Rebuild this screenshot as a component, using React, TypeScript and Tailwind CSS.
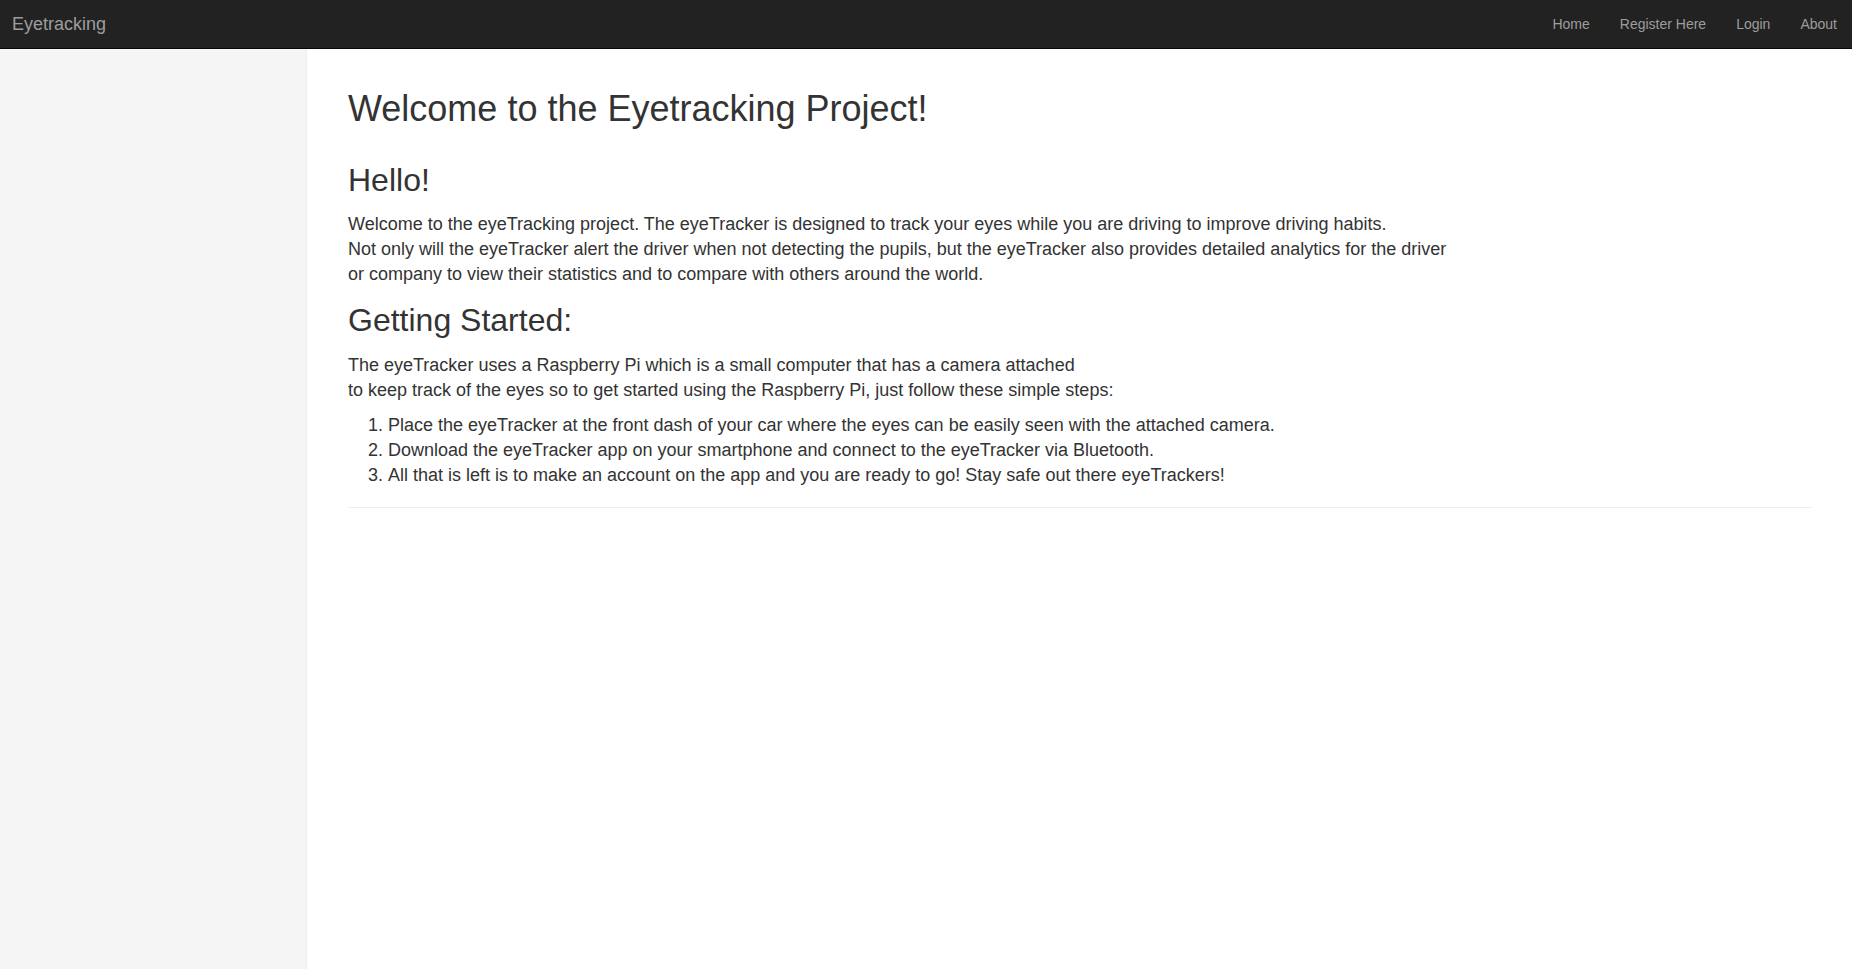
const navLinks = ['Home', 'Register Here', 'Login', 'About']

const steps = [
  'Place the eyeTracker at the front dash of your car where the eyes can be easily seen with the attached camera.',
  'Download the eyeTracker app on your smartphone and connect to the eyeTracker via Bluetooth.',
  'All that is left is to make an account on the app and you are ready to go! Stay safe out there eyeTrackers!',
]

export default function App() {
  return (
    <div className="min-h-screen flex flex-col bg-white text-[#333] font-['Liberation_Sans',Arial,sans-serif]">
      {/* Top navbar */}
      <nav className="h-[49px] bg-[#222] border-b border-[#080808] flex items-start justify-between">
        <a className="block pl-[12px] pr-[15px] pt-[14px] text-[18px] leading-[20px] text-[#9d9d9d]">Eyetracking</a>
        <ul className="flex">
          {navLinks.map((l) => (
            <li key={l}>
              <a className="block px-[15px] pt-[14px] text-[14px] leading-[20px] text-[#9d9d9d]">{l}</a>
            </li>
          ))}
        </ul>
      </nav>

      <div className="flex-1 flex">
        {/* Sidebar */}
        <aside className="w-[307px] shrink-0 bg-[#f5f5f5] border-r border-[#eee]" />

        {/* Main */}
        <main className="flex-1 pl-[41px] pr-10 pt-10">
          <h1 className="text-[36px] leading-[40px] font-normal">Welcome to the Eyetracking Project!</h1>

          <h2 className="mt-[34px] text-[32px] leading-[35px] font-normal">Hello!</h2>
          <p className="mt-[14px] text-[18px] leading-[25px]">
            Welcome to the eyeTracking project. The eyeTracker is designed to track your eyes while you are driving to improve driving habits.
            <br />
            Not only will the eyeTracker alert the driver when not detecting the pupils, but the eyeTracker also provides detailed analytics for the driver
            <br />
            or company to view their statistics and to compare with others around the world.
          </p>

          <h2 className="mt-[16px] text-[32px] leading-[35px] font-normal">Getting Started:</h2>
          <p className="mt-[15px] text-[18px] leading-[25px]">
            The eyeTracker uses a Raspberry Pi which is a small computer that has a camera attached
            <br />
            to keep track of the eyes so to get started using the Raspberry Pi, just follow these simple steps:
          </p>
          <ol className="mt-[10px] pl-[40px] list-decimal text-[18px] leading-[25px]">
            {steps.map((s) => (
              <li key={s}>{s}</li>
            ))}
          </ol>

          <hr className="mt-[19px] border-0 border-t border-[#eee]" />
        </main>
      </div>
    </div>
  )
}
